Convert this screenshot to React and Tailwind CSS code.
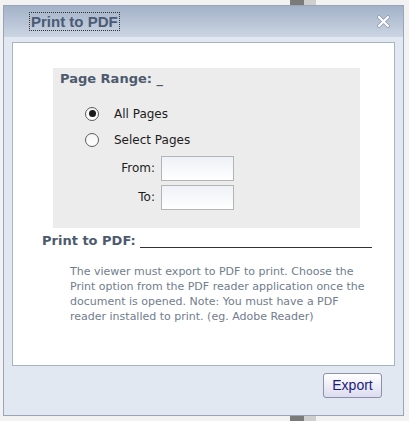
import { useState } from 'react';

const TAHOMA = { fontFamily: '"DejaVu Sans", Verdana, sans-serif' };
const ARIAL = { fontFamily: '"Liberation Sans", Arial, sans-serif' };

function Radio({ checked, label, onSelect }) {
  return (
    <label className="flex items-center gap-[15px] cursor-pointer" onClick={onSelect}>
      <span className="flex h-[14px] w-[14px] items-center justify-center rounded-full border border-[#5c5c5c] bg-gradient-to-b from-[#f4f4f4] to-white">
        {checked && <span className="h-[7px] w-[7px] rounded-full bg-[#1a1a1a]" />}
      </span>
      <span className="text-[12px] text-[#1c1c1c]">{label}</span>
    </label>
  );
}

export default function App() {
  const [range, setRange] = useState('all');

  return (
    <div className="relative h-[421px] w-[409px] overflow-hidden bg-[#f2f2f2]" style={TAHOMA}>
      {/* page peeking out behind the dialog */}
      <div className="absolute left-[290px] top-0 h-[5px] w-[14px] bg-[#7b7b7b]" />
      <div className="absolute left-[304px] top-0 h-[5px] w-[12px] bg-[#cfcfcf]" />
      <div className="absolute left-[290px] bottom-0 h-[5px] w-[14px] bg-[#7b7b7b]" />
      <div className="absolute left-[304px] bottom-0 h-[5px] w-[12px] bg-[#cfcfcf]" />

      {/* ── Dialog ───────────────────────── */}
      <div className="relative ml-[3px] mt-[5px] flex h-[411px] w-[401px] flex-col border border-[#9aa6b8] bg-[#e2e8f1]">
        {/* Title bar */}
        <div className="flex h-[31px] shrink-0 items-center justify-between bg-gradient-to-b from-[#a3b2c8] to-[#cbd5e3] pl-[25px] pr-[13px]">
          <span className="border border-dotted border-[#333] px-[1px] text-[15px] font-bold leading-[17px] text-[#4b5b74]" style={ARIAL}>
            Print to PDF
          </span>
          <svg width="13" height="13" viewBox="0 0 13 13">
            <path d="M2 2 L11 11 M11 2 L2 11" stroke="#8e99aa" strokeWidth="3.6" strokeLinecap="round" />
            <path d="M2 2 L11 11 M11 2 L2 11" stroke="#ffffff" strokeWidth="2.2" strokeLinecap="round" />
          </svg>
        </div>

        {/* Content */}
        <div className="px-[8px] pt-[5px]">
          <div className="h-[324px] border border-[#a9b4c3] bg-white">
            <div className="ml-[40px] mt-[25px] h-[160px] w-[307px] bg-[#ececec] pl-[7px] pt-[1px]">
              <div className="text-[13px] font-bold text-[#4d5a6e]">Page Range: _</div>
              <div className="ml-[25px] mt-[16px] flex flex-col gap-[8px]">
                <Radio checked={range === 'all'} label="All Pages" onSelect={() => setRange('all')} />
                <Radio checked={range === 'select'} label="Select Pages" onSelect={() => setRange('select')} />
              </div>
              <div className="mt-[7px] grid grid-cols-[95px_73px] items-center gap-x-[6px] gap-y-[4px] text-[12px] text-[#1c1c1c]">
                <span className="text-right">From:</span>
                <input className="h-[25px] w-[73px] border border-[#b4b4b4] bg-gradient-to-b from-[#eef1f6] to-white outline-none" />
                <span className="text-right">To:</span>
                <input className="h-[25px] w-[73px] border border-[#b4b4b4] bg-gradient-to-b from-[#eef1f6] to-white outline-none" />
              </div>
            </div>

            <div className="ml-[29px] mt-[3px] flex items-end gap-[4px]">
              <span className="text-[13px] font-bold text-[#4d5a6e]">Print to PDF:</span>
              <span className="mb-[3px] h-[1px] w-[232px] bg-[#333]" />
            </div>

            <p className="ml-[57px] mr-[22px] mt-[13px] text-[11px] leading-[15.3px] text-[#707d8e]">
              The viewer must export to PDF to print. Choose the Print option from the PDF reader application once the document is opened. Note: You must have a PDF reader installed to print. (eg. Adobe Reader)
            </p>
          </div>
        </div>

        {/* Footer */}
        <div className="flex justify-end pr-[21px] pt-[7px]">
          <button className="h-[25px] w-[59px] rounded-[3px] border border-[#8c91a8] bg-gradient-to-b from-white to-[#dcdcf0] text-[14px] text-[#1b1b7a]" style={ARIAL}>
            Export
          </button>
        </div>
      </div>
    </div>
  );
}
